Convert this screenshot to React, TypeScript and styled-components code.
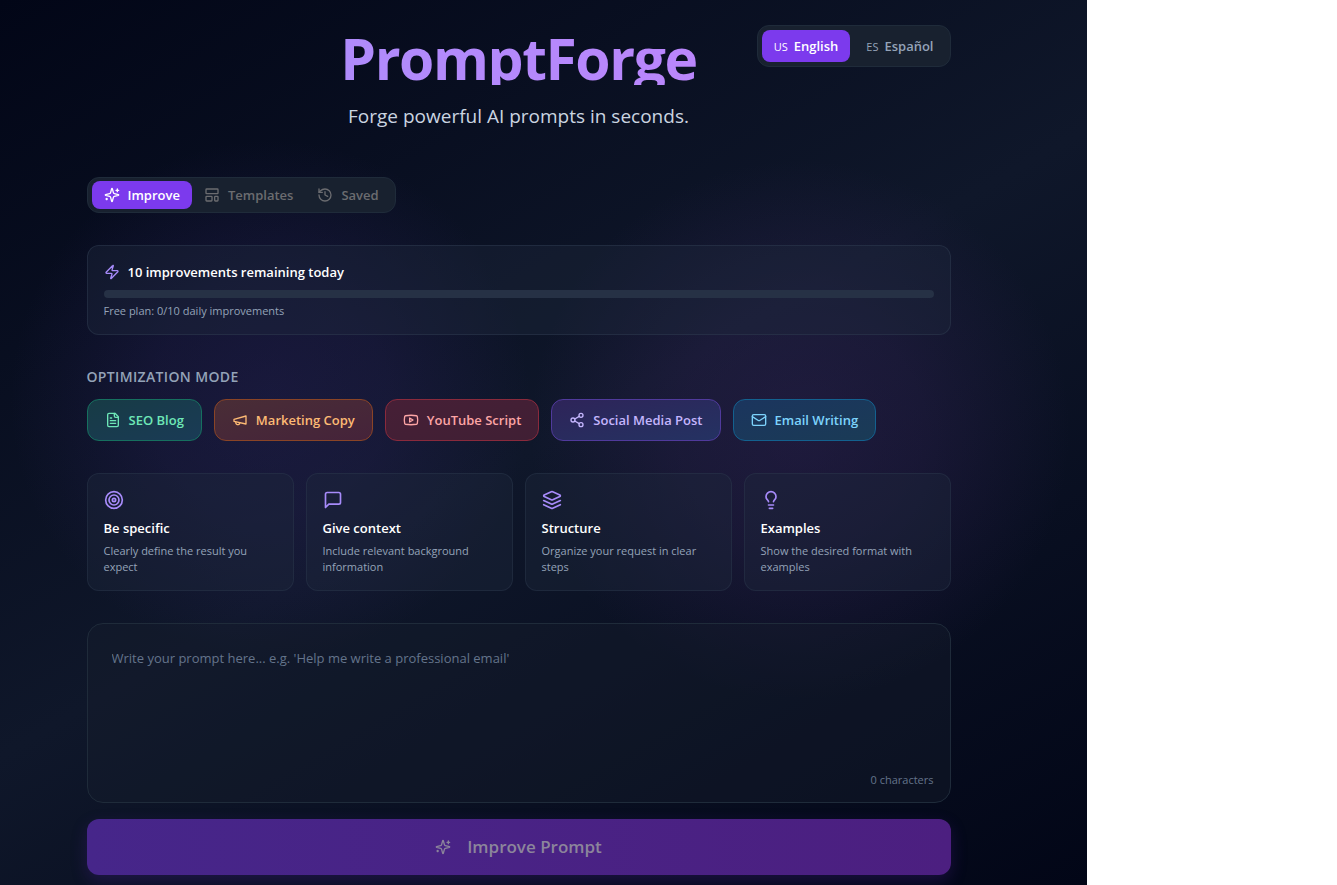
import { useState, type ReactNode } from 'react';
import styled, { createGlobalStyle, css } from 'styled-components';
import { LayoutTemplate, History, Zap, Share2, Target, Lightbulb } from 'lucide-react';

const GlobalStyle = createGlobalStyle`
  *, *::before, *::after { box-sizing: border-box; }
  body {
    margin: 0;
    background: #ffffff;
    color: #ffffff;
    font-family: 'Segoe UI', 'Open Sans', 'Noto Sans', sans-serif;
    font-size: 14px;
    line-height: 20px;
    overflow-x: hidden;
  }
  button, textarea { font: inherit; color: inherit; }
  button { border: 0; background: none; padding: 0; cursor: pointer; }
  h1, h2, h3, p { margin: 0; }
`;

const Page = styled.div`
  margin-right: 250px;
  min-height: 100vh;
  padding: 25px 66px 10px 16px;
  background:
    radial-gradient(circle 260px at 270px 400px, rgba(60, 42, 120, 0.28), rgba(60, 42, 120, 0.21) 45%, transparent),
    radial-gradient(circle 270px at 800px 430px, rgba(72, 42, 112, 0.3), rgba(72, 42, 112, 0.22) 45%, transparent),
    linear-gradient(150deg, #020617 0%, #0f172a 50%, #020617 100%);
`;

const Content = styled.main`
  max-width: 864px;
  margin: 0 auto;
`;

const Header = styled.header`
  display: grid;
  grid-template-columns: 1fr auto 1fr;
  align-items: start;
`;

const Brand = styled.div`
  grid-column: 2;
  text-align: center;
`;

const Title = styled.h1`
  height: 60px;
  font-size: 57px;
  line-height: 66px;
  font-weight: 700;
  letter-spacing: -0.025em;
  color: transparent;
  background: linear-gradient(90deg, #af8bfb, #ba86fc);
  background-clip: text;
  -webkit-background-clip: text;
`;

const Tagline = styled.p`
  margin-top: 16px;
  font-size: 19px;
  line-height: 30px;
  color: #cbd5e1;
`;

const Segmented = styled.div`
  display: inline-flex;
  padding: 4px;
  border: 1px solid #1f2b3a;
  border-radius: 12px;
  background: #18212f;
`;

const LanguageSwitch = styled(Segmented)`
  justify-self: end;
  gap: 4px;
`;

const LanguageButton = styled.button<{ $active?: boolean }>`
  display: flex;
  align-items: center;
  gap: 6px;
  height: 32px;
  padding: 0 12px;
  border-radius: 8px;
  font-size: 13px;
  font-weight: 600;
  color: ${(p) => (p.$active ? '#ffffff' : '#94a3b8')};
  background: ${(p) => (p.$active ? '#7c3aed' : 'transparent')};
`;

const Code = styled.span`
  padding-top: 2px;
  font-size: 11px;
  line-height: 16px;
  font-weight: 400;
`;

const Tabs = styled(Segmented)`
  margin-top: 46px;
  padding: 3px 4px;
`;

const Tab = styled.button<{ $active?: boolean }>`
  display: flex;
  align-items: center;
  gap: 8px;
  height: 28px;
  padding: 0 12px;
  border-radius: 8px;
  font-size: 13px;
  font-weight: 600;
  color: ${(p) => (p.$active ? '#ffffff' : '#6b6c70')};
  background: ${(p) => (p.$active ? '#7c3aed' : 'transparent')};
`;

const panel = css`
  padding: 16px 16px 15px;
  border: 1px solid rgba(51, 65, 85, 0.45);
  border-radius: 12px;
  background: rgba(30, 41, 59, 0.4);
`;

const Usage = styled.section`
  ${panel}
  margin-top: 32px;
`;

const UsageTitle = styled.h2`
  display: flex;
  align-items: center;
  gap: 8px;
  font-size: 13px;
  line-height: 20px;
  font-weight: 600;
  svg { color: #a78bfa; }
`;

const Meter = styled.div`
  height: 8px;
  margin: 8px 0 5px;
  border-radius: 4px;
  background: #263145;
`;

const Small = styled.p`
  font-size: 11px;
  line-height: 16px;
  color: #94a3b8;
`;

const SectionLabel = styled.h2`
  margin: 32px 0 12px;
  font-size: 14px;
  line-height: 20px;
  font-weight: 600;
  letter-spacing: 0.025em;
  text-transform: uppercase;
  color: #94a3b8;
`;

const Modes = styled.div`
  display: flex;
  flex-wrap: wrap;
  gap: 12px;
`;

const Mode = styled.button<{ $ink: string; $edge: string; $from: string; $to: string }>`
  display: flex;
  align-items: center;
  gap: 8px;
  height: 42px;
  padding: 0 17px;
  border: 1px solid ${(p) => p.$edge};
  border-radius: 12px;
  font-size: 13px;
  font-weight: 600;
  color: ${(p) => p.$ink};
  background: linear-gradient(to bottom right, ${(p) => p.$from}, ${(p) => p.$to});
`;

const Tips = styled.div`
  display: grid;
  grid-template-columns: repeat(4, 1fr);
  gap: 12px;
  margin-top: 32px;
`;

const Tip = styled.article`
  ${panel}
  border-color: rgba(51, 65, 85, 0.35);
  svg { display: block; color: #a78bfa; }
`;

const TipTitle = styled.h3`
  margin: 8px 0 5px;
  font-size: 13px;
  line-height: 20px;
  font-weight: 600;
`;

const Composer = styled.div`
  display: flex;
  flex-direction: column;
  height: 180px;
  margin-top: 32px;
  padding: 24px 16px 14px 24px;
  border: 1px solid #1f2b3a;
  border-radius: 16px;
  background: rgba(22, 30, 46, 0.4);
`;

const PromptInput = styled.textarea`
  flex: 1;
  padding: 0;
  border: 0;
  outline: 0;
  resize: none;
  background: transparent;
  font-size: 13px;
  line-height: 20px;
  &::placeholder { color: #64748b; opacity: 1; }
`;

const Counter = styled.span`
  align-self: flex-end;
  font-size: 11px;
  line-height: 16px;
  color: #64748b;
`;

const Submit = styled.button`
  display: flex;
  align-items: center;
  justify-content: center;
  gap: 16px;
  width: 100%;
  height: 56px;
  margin-top: 16px;
  border-radius: 12px;
  font-size: 17px;
  font-weight: 600;
  color: #8c859b;
  background: linear-gradient(90deg, #46268a, #4c1f80);
  box-shadow: 0 6px 16px rgba(76, 29, 149, 0.3);
`;

type IconProps = { size?: number };

function Glyph({ size = 16, children }: IconProps & { children: ReactNode }) {
  return (
    <svg width={size} height={size} viewBox="0 0 24 24" fill="none" stroke="currentColor" strokeWidth="2" strokeLinecap="round" strokeLinejoin="round" aria-hidden="true">
      {children}
    </svg>
  );
}

const Sparkles = (p: IconProps) => (
  <Glyph {...p}>
    <path d="M9.937 15.5A2 2 0 0 0 8.5 14.063l-6.135-1.582a.5.5 0 0 1 0-.962L8.5 9.936A2 2 0 0 0 9.937 8.5l1.582-6.135a.5.5 0 0 1 .963 0L14.063 8.5A2 2 0 0 0 15.5 9.937l6.135 1.581a.5.5 0 0 1 0 .964L15.5 14.063a2 2 0 0 0-1.437 1.437l-1.582 6.135a.5.5 0 0 1-.963 0z" />
    <path d="M20 3v4M22 5h-4M4 17v2M5 18H3" />
  </Glyph>
);

const FileText = (p: IconProps) => (
  <Glyph {...p}>
    <path d="M15 2H6a2 2 0 0 0-2 2v16a2 2 0 0 0 2 2h12a2 2 0 0 0 2-2V7Z" />
    <path d="M14 2v4a2 2 0 0 0 2 2h4M10 9H8M16 13H8M16 17H8" />
  </Glyph>
);

const Megaphone = (p: IconProps) => (
  <Glyph {...p}>
    <path d="m3 11 18-5v12L3 14v-3z" />
    <path d="M11.6 16.8a3 3 0 1 1-5.8-1.6" />
  </Glyph>
);

const PlayBox = (p: IconProps) => (
  <Glyph {...p}>
    <path d="M2.5 17a24.12 24.12 0 0 1 0-10 2 2 0 0 1 1.4-1.4 49.56 49.56 0 0 1 16.2 0A2 2 0 0 1 21.5 7a24.12 24.12 0 0 1 0 10 2 2 0 0 1-1.4 1.4 49.55 49.55 0 0 1-16.2 0A2 2 0 0 1 2.5 17" />
    <path d="m10 15 5-3-5-3z" />
  </Glyph>
);

const Mail = (p: IconProps) => (
  <Glyph {...p}>
    <rect width="20" height="16" x="2" y="4" rx="2" />
    <path d="m22 7-8.97 5.7a1.94 1.94 0 0 1-2.06 0L2 7" />
  </Glyph>
);

const MessageSquare = (p: IconProps) => (
  <Glyph {...p}>
    <path d="M21 15a2 2 0 0 1-2 2H7l-4 4V5a2 2 0 0 1 2-2h14a2 2 0 0 1 2 2z" />
  </Glyph>
);

const Layers = (p: IconProps) => (
  <Glyph {...p}>
    <path d="m12.83 2.18a2 2 0 0 0-1.66 0L2.6 6.08a1 1 0 0 0 0 1.83l8.58 3.91a2 2 0 0 0 1.66 0l8.58-3.9a1 1 0 0 0 0-1.83Z" />
    <path d="m22 17.65-9.17 4.16a2 2 0 0 1-1.66 0L2 17.65" />
    <path d="m22 12.65-9.17 4.16a2 2 0 0 1-1.66 0L2 12.65" />
  </Glyph>
);

const modes = [
  { label: 'SEO Blog', Icon: FileText, ink: '#6ee7b7', edge: '#16705f', from: '#173b45', to: '#1a3b56' },
  { label: 'Marketing Copy', Icon: Megaphone, ink: '#fdba74', edge: '#8a4426', from: '#492d36', to: '#45233a' },
  { label: 'YouTube Script', Icon: PlayBox, ink: '#fca5a5', edge: '#8a2a3c', from: '#461f36', to: '#401f34' },
  { label: 'Social Media Post', Icon: Share2, ink: '#c4b5fd', edge: '#503a9c', from: '#2e2459', to: '#243262' },
  { label: 'Email Writing', Icon: Mail, ink: '#7dd3fc', edge: '#13618f', from: '#1b355e', to: '#1a3b56' },
];

const tips = [
  { title: 'Be specific', text: 'Clearly define the result you expect', Icon: Target },
  { title: 'Give context', text: 'Include relevant background information', Icon: MessageSquare },
  { title: 'Structure', text: 'Organize your request in clear steps', Icon: Layers },
  { title: 'Examples', text: 'Show the desired format with examples', Icon: Lightbulb },
];

export default function App() {
  const [prompt, setPrompt] = useState('');
  return (
    <>
      <GlobalStyle />
      <Page>
        <Content>
          <Header>
            <Brand>
              <Title>PromptForge</Title>
              <Tagline>Forge powerful AI prompts in seconds.</Tagline>
            </Brand>
            <LanguageSwitch>
              <LanguageButton $active><Code>US</Code>English</LanguageButton>
              <LanguageButton><Code>ES</Code>Español</LanguageButton>
            </LanguageSwitch>
          </Header>

          <Tabs>
            <Tab $active><Sparkles size={16} />Improve</Tab>
            <Tab><LayoutTemplate size={16} />Templates</Tab>
            <Tab><History size={16} />Saved</Tab>
          </Tabs>

          <Usage>
            <UsageTitle><Zap size={16} />10 improvements remaining today</UsageTitle>
            <Meter role="progressbar" aria-label="Daily improvements used" aria-valuenow={0} aria-valuemin={0} aria-valuemax={10} />
            <Small>Free plan: 0/10 daily improvements</Small>
          </Usage>

          <SectionLabel>Optimization mode</SectionLabel>
          <Modes>
            {modes.map(({ label, Icon, ink, edge, from, to }) => (
              <Mode key={label} $ink={ink} $edge={edge} $from={from} $to={to}>
                <Icon size={16} />
                {label}
              </Mode>
            ))}
          </Modes>

          <Tips>
            {tips.map(({ title, text, Icon }) => (
              <Tip key={title}>
                <Icon size={20} />
                <TipTitle>{title}</TipTitle>
                <Small>{text}</Small>
              </Tip>
            ))}
          </Tips>

          <Composer>
            <PromptInput
              aria-label="Prompt"
              placeholder="Write your prompt here... e.g. 'Help me write a professional email'"
              value={prompt}
              onChange={(e) => setPrompt(e.target.value)}
            />
            <Counter>{prompt.length} characters</Counter>
          </Composer>
          <Submit><Sparkles size={16} />Improve Prompt</Submit>
        </Content>
      </Page>
    </>
  );
}
